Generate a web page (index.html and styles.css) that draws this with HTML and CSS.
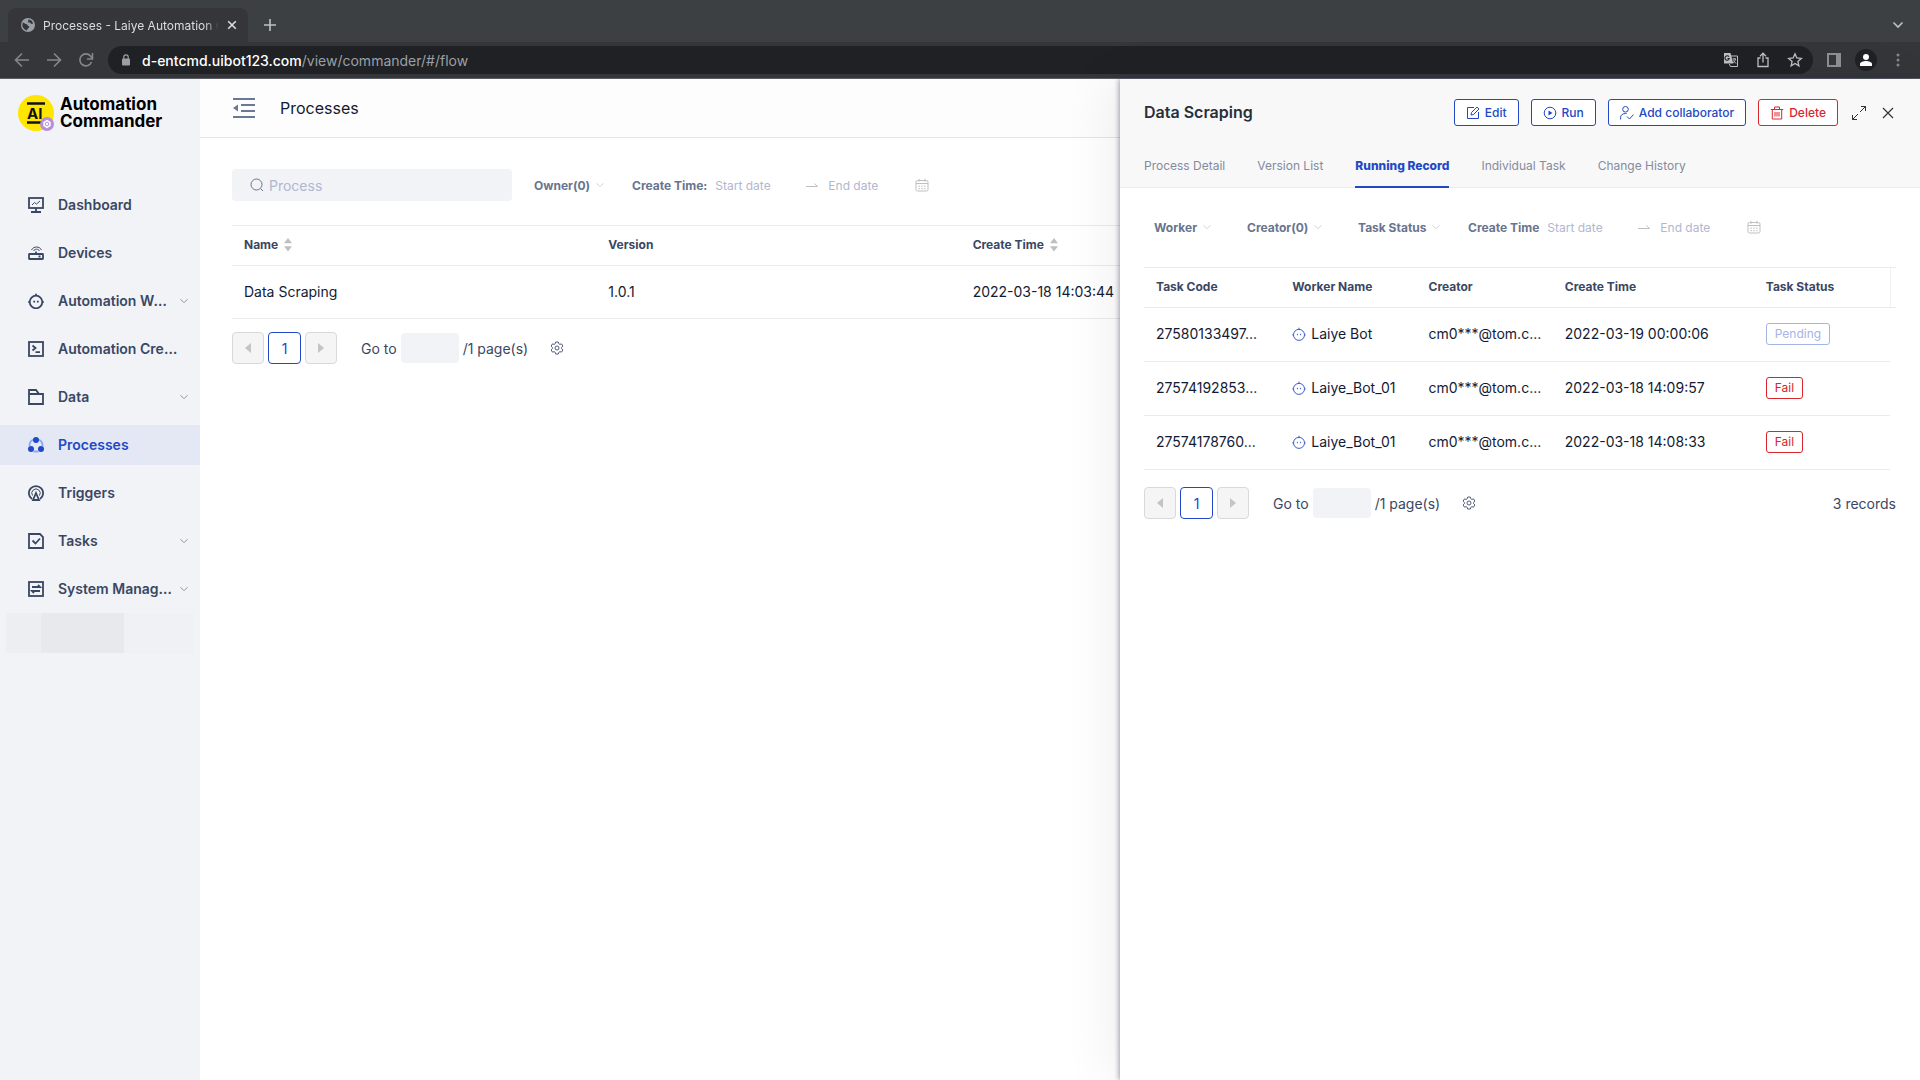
FILE: index.html
```html
<!DOCTYPE html>
<html lang="en">
  <head>
    <meta charset="UTF-8" />
    <meta name="viewport" content="width=device-width, initial-scale=1.0" />
    <title>Processes - Laiye Automation Commander</title>
    <link rel="stylesheet" href="styles.css">
  </head>
  <body>
    <!-- shared icons -->
    <svg class="sprite" width="0" height="0" aria-hidden="true">
      <symbol id="chevron" viewBox="0 0 8 8"><path d="M.5 2.200 4 5.700l3.500-3.500" /></symbol>
      <symbol id="calendar" viewBox="0 0 14 14">
        <rect x="1" y="2.500" width="12" height="10.500" rx="1.500" />
        <path d="M1 5.500h12M4 .8v3M10 .8v3M3.500 8.200h1.500M6.200 8.200h1.600M9 8.200h1.500M3.500 10.700h1.500M6.200 10.700h1.600M9 10.700h1.500" />
      </symbol>
      <symbol id="range" viewBox="0 0 12 12"><path d="M0 7.500h11.500L8.500 4.500" /></symbol>
      <symbol id="bot" viewBox="0 0 16 16">
        <circle cx="8" cy="9" r="6.300" />
        <path d="M8 2.700V.8M1.500 9H.3M15.700 9h-1.200M6.200 7.800v1.600M9.800 7.800v1.600" />
      </symbol>
      <symbol id="gear" viewBox="0 0 16 16">
        <path d="M6.500 1.200h3l.5 1.900 1.300.8 1.900-.6 1.500 2.600-1.400 1.400v1.500l1.400 1.400-1.500 2.500-1.900-.5-1.300.8-.5 1.900h-3L6 13l-1.300-.8-1.900.5-1.500-2.500 1.400-1.400V7.300L1.300 5.900l1.500-2.600 1.900.6L6 3.100z" />
        <circle cx="8" cy="8" r="2.300" />
      </symbol>
      <symbol id="sort" viewBox="0 0 8 14"><path d="M4 0l4 5.200H0zM4 13.500l4-5.200H0z" /></symbol>
      <symbol id="prev" viewBox="0 0 8 12"><path d="M7 1v10L1 6z" /></symbol>
      <symbol id="next" viewBox="0 0 8 12"><path d="M1 1v10l6-5z" /></symbol>
    </svg>

    <header class="browser">
      <div class="tabs-strip">
        <div class="browser-tab">
          <svg class="globe" width="14" height="14" viewBox="0 0 14 14">
            <circle cx="7" cy="7" r="7" fill="#9aa0a6" />
            <path d="M2 4.500c1.500 0 1.500 1.500 3 1.500s1 1.500 2.500 2 .5 2-.5 2.500-.5 2-1.500 2A5.600 5.600 0 0 1 2 4.500zM7 1.500c2.500 0 4.500 1.500 5 4-1 1-2 .5-2.500-.5S7 5 7 4s1-1 0-2.500z" fill="#35363a" />
          </svg>
          <span class="tab-title">Processes - Laiye Automation Commander</span>
          <button class="chrome-btn" aria-label="Close tab">
            <svg width="10" height="10" viewBox="0 0 10 10"><path d="M1.200 1.200l7.600 7.600M8.800 1.200 1.200 8.800" stroke="#dadce0" /></svg>
          </button>
        </div>
        <button class="chrome-btn" aria-label="New tab">
          <svg width="12" height="12" viewBox="0 0 12 12"><path d="M6 0v12M0 6h12" stroke="#bdc1c6" /></svg>
        </button>
        <button class="chrome-btn tab-search" aria-label="Search tabs">
          <svg width="12" height="12" viewBox="0 0 12 12"><path d="M1.500 3.500 6 8l4.500-4.500" stroke="#bdc1c6" /></svg>
        </button>
      </div>
      <div class="toolbar">
        <div class="nav-btns">
          <button class="chrome-btn" aria-label="Back">
            <svg width="16" height="16" viewBox="0 0 16 16"><path d="M15 8H2M8 1.500 1.500 8 8 14.500" stroke="#85878a" /></svg>
          </button>
          <button class="chrome-btn" aria-label="Forward">
            <svg width="16" height="16" viewBox="0 0 16 16"><path d="M1 8h13M8 1.500 14.500 8 8 14.500" stroke="#85878a" /></svg>
          </button>
          <button class="chrome-btn" aria-label="Reload">
            <svg width="16" height="16" viewBox="0 0 16 16"><path d="M13.500 10A6 6 0 1 1 12.500 4l1.500 2" stroke="#85878a" /><path d="M14.500 1v6H9" stroke="#85878a" /></svg>
          </button>
        </div>
        <div class="omnibox">
          <svg width="10" height="12" viewBox="0 0 10 12"><rect x="1" y="4.500" width="8" height="7" rx="1" fill="#9aa0a6" /><path d="M2.800 5V3a2.200 2.200 0 0 1 4.400 0v2" fill="none" stroke="#9aa0a6" stroke-width="1.200" /></svg>
          <span class="url"><b>d-entcmd.uibot123.com</b>/view/commander/#/flow</span>
          <button class="chrome-btn" aria-label="Translate">
            <svg width="16" height="16" viewBox="0 0 16 16">
              <path d="M7 4h7.500v10.500H7.500L6.300 12" stroke="#bdc1c6" stroke-width="1" />
              <path d="M1 1h6.500l2.800 10.500H1z" fill="#bdc1c6" />
              <path d="M6 4.800A2.200 2.200 0 1 0 6.300 6.500H4.500" stroke="#202124" stroke-width="1.100" />
              <path d="M9.500 7H13M11.200 6v1M12.500 7c-.4 2-1.500 3-2.500 3.800M10.500 8.500l2.500 3" stroke="#bdc1c6" stroke-width="1" />
            </svg>
          </button>
          <button class="chrome-btn" aria-label="Share">
            <svg width="16" height="16" viewBox="0 0 16 16"><path d="M5.500 6H3v8.500h10V6h-2.500M8 10.500V1.500M5 4.200l3-3 3 3" stroke="#bdc1c6" stroke-width="1.300" /></svg>
          </button>
          <button class="chrome-btn" aria-label="Bookmark">
            <svg width="16" height="16" viewBox="0 0 16 16"><path d="M8 1.800l1.800 4.200 4.500.4-3.400 3 1 4.400L8 11.500l-3.900 2.300 1-4.400-3.400-3L6.200 6z" stroke="#bdc1c6" stroke-width="1.300" /></svg>
          </button>
        </div>
        <button class="chrome-btn" aria-label="Side panel">
          <svg width="14" height="14" viewBox="0 0 14 14"><path d="M1 1h12v12H1z" stroke="#8d8f93" stroke-width="2" /><path d="M9 1h4v12H9z" fill="#8d8f93" /></svg>
        </button>
        <button class="chrome-btn avatar" aria-label="Profile">
          <svg width="12" height="12" viewBox="0 0 12 12"><circle cx="6" cy="3" r="3" /><path d="M0 12v-2c0-2 3.500-3 6-3s6 1 6 3v2z" /></svg>
        </button>
        <button class="chrome-btn" aria-label="Menu">
          <svg width="4" height="14" viewBox="0 0 4 14"><circle cx="2" cy="2" r="1.500" /><circle cx="2" cy="7" r="1.500" /><circle cx="2" cy="12" r="1.500" /></svg>
        </button>
      </div>
    </header>

    <div class="app">
      <aside class="sidebar">
        <div class="logo">
          <svg width="38" height="38" viewBox="0 0 38 38">
            <circle cx="18" cy="18" r="18" fill="#ffe600" />
            <path d="M9 8.500h18M9 27.500h14" stroke="#111" stroke-width="2.400" />
            <text x="9" y="24" class="logo-mark">AI</text>
            <circle cx="29" cy="29" r="7" fill="#b58fdc" />
            <path d="M29 24.800l3.700 2.100v4.200L29 33.200l-3.700-2.100v-4.200z" fill="#fff" />
            <circle cx="29" cy="29" r="1.800" fill="none" stroke="#b58fdc" />
          </svg>
          <span class="logo-text">Automation<br />Commander</span>
        </div>
        <nav class="menu">
          <a class="menu-item" href="#">
            <svg class="menu-icon" viewBox="0 0 16 16"><rect x="1" y="1" width="14" height="10" /><path d="M8 11v4M3 15h10" /><path class="thin" d="M4 8l2.500-2.500 2 1.500L12 4" /></svg>
            <span>Dashboard</span>
          </a>
          <a class="menu-item" href="#">
            <svg class="menu-icon" viewBox="0 0 16 16"><rect x="1" y="9" width="14" height="5" rx=".5" /><path d="M8 9V6.500M10.500 11.500h2" /><path class="thin" d="M3.500 5c2-4 8-4 10 0M5.500 6c1.200-2.400 4.800-2.400 6 0" /></svg>
            <span>Devices</span>
          </a>
          <a class="menu-item" href="#">
            <svg class="menu-icon"><use href="#bot" /></svg>
            <span>Automation Worker</span>
            <svg class="chevron"><use href="#chevron" /></svg>
          </a>
          <a class="menu-item" href="#">
            <svg class="menu-icon" viewBox="0 0 16 16"><rect x="1" y="1" width="14" height="14" /><path d="M4.500 4.500l3 2.500-3 2.500M7.500 11.200H12" /></svg>
            <span>Automation Creator</span>
          </a>
          <a class="menu-item" href="#">
            <svg class="menu-icon" viewBox="0 0 16 16"><path d="M1 15V1h7l3 4h4v10zM1 5h10" /></svg>
            <span>Data</span>
            <svg class="chevron"><use href="#chevron" /></svg>
          </a>
          <a class="menu-item active" href="#">
            <svg class="menu-icon" viewBox="0 0 16 16"><path class="ring" d="M5.500 2.500A6.500 6.500 0 0 0 1.500 9M10.500 2.500a6.500 6.500 0 0 1 4 6.500M5.500 14.500h5" /><circle class="dot" cx="8" cy="3" r="3" /><circle class="dot" cx="3" cy="12" r="3" /><circle class="dot" cx="13" cy="12" r="3" /></svg>
            <span>Processes</span>
          </a>
          <a class="menu-item" href="#">
            <svg class="menu-icon" viewBox="0 0 16 16"><path d="M4 14A7.100 7.100 0 1 1 12 14" /><path class="thin" d="M4.500 10.500a4.200 4.200 0 1 1 7 0" /><path d="M8 8l3 7H5z" /></svg>
            <span>Triggers</span>
          </a>
          <a class="menu-item" href="#">
            <svg class="menu-icon" viewBox="0 0 16 16"><path d="M1 1h11l3 3v11H1zM4.500 7.500l3 3 4.500-5" /></svg>
            <span>Tasks</span>
            <svg class="chevron"><use href="#chevron" /></svg>
          </a>
          <a class="menu-item" href="#">
            <svg class="menu-icon" viewBox="0 0 16 16"><rect x="1" y="1" width="14" height="14" /><path d="M4 6h8L10 4M12 10H4l2 2" /></svg>
            <span>System Management</span>
            <svg class="chevron"><use href="#chevron" /></svg>
          </a>
        </nav>
        <div class="redacted"><i></i><i></i><i></i></div>
      </aside>

      <main class="main">
        <div class="page-head">
          <button class="icon-btn" aria-label="Collapse menu">
            <svg width="22" height="20" viewBox="0 0 22 20"><path d="M0 1h22M8 7h14M8 13h14M0 19h22" stroke="#6b7896" stroke-width="1.800" fill="none" /><path d="M5 6.500v7L0 10z" fill="#6b7896" /></svg>
          </button>
          <h1>Processes</h1>
        </div>

        <div class="content">
          <div class="filters">
            <label class="search">
              <svg width="14" height="14" viewBox="0 0 14 14"><circle cx="6.500" cy="6.500" r="5.500" /><path d="M10.500 10.500l2.500 2.500" /></svg>
              <input type="text" placeholder="Process" aria-label="Process" />
            </label>
            <div class="select">
              <select aria-label="Owner"><option>Owner(0)</option></select>
              <svg class="chevron"><use href="#chevron" /></svg>
            </div>
            <div class="dates">
              <label for="listStart">Create Time:</label>
              <input type="text" id="listStart" placeholder="Start date" />
              <svg class="range"><use href="#range" /></svg>
              <input type="text" placeholder="End date" aria-label="End date" />
              <svg class="calendar"><use href="#calendar" /></svg>
            </div>
          </div>

          <table class="table process-table">
            <thead>
              <tr>
                <th>Name <svg class="sort"><use href="#sort" /></svg></th>
                <th>Version</th>
                <th>Create Time <svg class="sort"><use href="#sort" /></svg></th>
              </tr>
            </thead>
            <tbody>
              <tr>
                <td>Data Scraping</td>
                <td>1.0.1</td>
                <td>2022-03-18 14:03:44</td>
              </tr>
            </tbody>
          </table>

          <div class="pager">
            <button class="page-btn" disabled aria-label="Previous page"><svg><use href="#prev" /></svg></button>
            <button class="page-btn current">1</button>
            <button class="page-btn" disabled aria-label="Next page"><svg><use href="#next" /></svg></button>
            <label class="goto">Go to <input type="text" /> /1 page(s)</label>
            <button class="icon-btn" aria-label="Table settings"><svg class="gear"><use href="#gear" /></svg></button>
          </div>
        </div>
      </main>

      <section class="drawer">
        <div class="drawer-head">
          <div class="drawer-title">
            <h2>Data Scraping</h2>
            <button class="btn">
              <svg width="14" height="14" viewBox="0 0 14 14"><path d="M8 1.500H1.500v11h11V6M5 9l.5-2.500L11 1l2 2-5.500 5.500z" /></svg>
              Edit
            </button>
            <button class="btn">
              <svg width="14" height="14" viewBox="0 0 14 14"><circle cx="7" cy="7" r="5.800" /><path d="M5.500 4.500v5L9.500 7z" fill="currentColor" stroke="none" /></svg>
              Run
            </button>
            <button class="btn">
              <svg width="14" height="14" viewBox="0 0 14 14"><circle cx="5.500" cy="3.300" r="2.800" /><path d="M.6 13.500v-2c0-2.500 2-4 5-4h1M7 10.500l2.500 2.500 4-4.500" /></svg>
              Add collaborator
            </button>
            <button class="btn danger">
              <svg width="14" height="14" viewBox="0 0 14 14"><path d="M.8 3.500h12.400M2.300 3.500v9.500h9.400V3.500M4.500 3.500v-2.500h5v2.500M5 6v4.500M7 6v4.500M9 6v4.500" /></svg>
              Delete
            </button>
            <button class="icon-btn" aria-label="Expand">
              <svg width="14" height="14" viewBox="0 0 14 14"><path d="M8 6l5.500-5.500M9 .5h4.500V5M6 8 .5 13.500M.5 9v4.500H5" stroke="#333" fill="none" /></svg>
            </button>
            <button class="icon-btn" aria-label="Close">
              <svg width="12" height="12" viewBox="0 0 12 12"><path d="M1 1l10 10M11 1 1 11" stroke="#333" stroke-width="1.200" fill="none" /></svg>
            </button>
          </div>
          <nav class="tabs">
            <a href="#">Process Detail</a>
            <a href="#">Version List</a>
            <a href="#" class="active">Running Record</a>
            <a href="#">Individual Task</a>
            <a href="#">Change History</a>
          </nav>
        </div>

        <div class="drawer-body">
          <div class="filters">
            <div class="select">
              <select aria-label="Worker"><option>Worker</option></select>
              <svg class="chevron"><use href="#chevron" /></svg>
            </div>
            <div class="select">
              <select aria-label="Creator"><option>Creator(0)</option></select>
              <svg class="chevron"><use href="#chevron" /></svg>
            </div>
            <div class="select">
              <select aria-label="Task Status"><option>Task Status</option></select>
              <svg class="chevron"><use href="#chevron" /></svg>
            </div>
            <div class="dates">
              <label for="recordStart">Create Time</label>
              <input type="text" id="recordStart" placeholder="Start date" />
              <svg class="range"><use href="#range" /></svg>
              <input type="text" placeholder="End date" aria-label="End date" />
              <svg class="calendar"><use href="#calendar" /></svg>
            </div>
          </div>

          <table class="table record-table">
            <thead>
              <tr>
                <th>Task Code</th>
                <th>Worker Name</th>
                <th>Creator</th>
                <th>Create Time</th>
                <th>Task Status</th>
                <th class="gutter"></th>
              </tr>
            </thead>
            <tbody>
              <tr>
                <td>27580133497...</td>
                <td><svg class="bot"><use href="#bot" /></svg>Laiye Bot</td>
                <td>cm0***@tom.c...</td>
                <td>2022-03-19 00:00:06</td>
                <td><span class="tag pending">Pending</span></td>
              </tr>
              <tr>
                <td>27574192853...</td>
                <td><svg class="bot"><use href="#bot" /></svg>Laiye_Bot_01</td>
                <td>cm0***@tom.c...</td>
                <td>2022-03-18 14:09:57</td>
                <td><span class="tag">Fail</span></td>
              </tr>
              <tr>
                <td>27574178760...</td>
                <td><svg class="bot"><use href="#bot" /></svg>Laiye_Bot_01</td>
                <td>cm0***@tom.c...</td>
                <td>2022-03-18 14:08:33</td>
                <td><span class="tag">Fail</span></td>
              </tr>
            </tbody>
          </table>

          <div class="pager">
            <button class="page-btn" disabled aria-label="Previous page"><svg><use href="#prev" /></svg></button>
            <button class="page-btn current">1</button>
            <button class="page-btn" disabled aria-label="Next page"><svg><use href="#next" /></svg></button>
            <label class="goto">Go to <input type="text" /> /1 page(s)</label>
            <button class="icon-btn" aria-label="Table settings"><svg class="gear"><use href="#gear" /></svg></button>
            <span class="records">3 records</span>
          </div>
        </div>
      </section>
    </div>
  </body>
</html>
```
FILE: styles.css
```css
* {
  box-sizing: border-box;
}
body {
  margin: 0;
  min-height: 100vh;
  display: flex;
  flex-direction: column;
  font-family: Inter, "Liberation Sans", sans-serif;
  font-size: 14px;
  color: #131a33;
  background: #fff;
}
button,
input,
select {
  font: inherit;
  color: inherit;
  background: none;
  border: none;
  padding: 0;
  margin: 0;
}
button {
  cursor: pointer;
}
a {
  color: inherit;
  text-decoration: none;
}
svg {
  flex: none;
}
.sprite {
  position: absolute;
}

/* browser */
.browser {
  background: #3c4043;
  border-bottom: 1px solid #5a5d61;
}
.chrome-btn {
  display: flex;
  flex: none;
}
.chrome-btn svg {
  fill: none;
  stroke-width: 1.6;
}
.tabs-strip {
  display: flex;
  align-items: center;
  gap: 16px;
  height: 42px;
  padding: 8px 16px 0 8px;
}
.browser-tab {
  display: flex;
  align-items: center;
  gap: 8px;
  width: 240px;
  height: 34px;
  padding: 0 11px 0 13px;
  background: #35363a;
  border-radius: 8px 8px 0 0;
  font-size: 12px;
  color: #dadce0;
}
.tab-title {
  flex: 1;
  overflow: hidden;
  white-space: nowrap;
  mask-image: linear-gradient(to right, #000 92%, transparent);
}
.tab-search {
  margin-left: auto;
}
.toolbar {
  display: flex;
  align-items: center;
  gap: 14px;
  height: 36px;
  padding: 0 20px 0 14px;
  background: #35363a;
}
.nav-btns {
  display: flex;
  gap: 16px;
}
.omnibox {
  flex: 1;
  display: flex;
  align-items: center;
  gap: 16px;
  height: 28px;
  padding: 0 10px 0 13px;
  background: #202124;
  border-radius: 14px;
  color: #9aa0a6;
}
.url {
  flex: 1;
}
.url b {
  font-weight: 500;
  color: #fff;
}
.omnibox > svg + .url {
  margin-left: -5px;
}
.avatar {
  justify-content: center;
  align-items: center;
  width: 22px;
  height: 22px;
  margin-right: 5px;
  border-radius: 50%;
  background: #202124;
}
.avatar svg {
  fill: #fff;
}
.toolbar > .chrome-btn:last-child svg {
  fill: #85878a;
}

/* app */
.app {
  position: relative;
  flex: 1;
  display: flex;
}
.sidebar {
  flex: none;
  width: 200px;
  background: #f1f3f7;
  color: #3a4763;
}
.logo {
  display: flex;
  gap: 4px;
  padding: 16px 18px;
}
.logo-mark {
  font-size: 15px;
  font-weight: 700;
  fill: #111;
}
.logo-text {
  font-size: 17px;
  font-weight: 700;
  line-height: 17px;
  padding-top: 1px;
  color: #000;
}
.menu {
  display: flex;
  flex-direction: column;
  gap: 8px;
  padding-top: 36px;
}
.menu-item {
  display: flex;
  align-items: center;
  height: 40px;
  padding: 0 12px 1px 28px;
  font-weight: 600;
}
.menu-item span {
  flex: 1;
  margin: 0 6px 0 14px;
  overflow: hidden;
  text-overflow: ellipsis;
  white-space: nowrap;
}
.menu-item.active {
  background: #e3e8f4;
  color: #2248c5;
}
.menu-icon {
  width: 16px;
  height: 16px;
  fill: none;
  stroke: currentColor;
  stroke-width: 1.8;
}
.menu-icon .thin {
  stroke-width: 1;
}
.menu-icon .ring {
  stroke: #85abfa;
}
.menu-icon .dot {
  fill: currentColor;
  stroke: none;
}
.chevron {
  width: 8px;
  height: 8px;
  fill: none;
  stroke: #8c95a8;
}
.redacted {
  display: flex;
  height: 40px;
  margin: 4px 6px;
}
.redacted i {
  flex: 6;
  background: #f0f1f5;
}
.redacted i:first-child {
  flex: 3;
  background: #edeef1;
}
.redacted i:nth-child(2) {
  flex: 7;
  background: #e8e9ec;
}

.main {
  flex: 1;
  min-width: 0;
}
.page-head {
  display: flex;
  align-items: center;
  gap: 25px;
  height: 59px;
  padding: 0 33px;
  background: #fdfdfd;
  border-bottom: 1px solid #e3e5e8;
}
.page-head h1 {
  margin: 0;
  font-size: 16px;
  font-weight: 400;
}
.icon-btn {
  display: flex;
}
.content {
  padding: 31px 32px;
}

/* filters */
.filters {
  display: flex;
  align-items: center;
  gap: 36px;
  height: 32px;
  font-size: 12px;
  color: #68748f;
}
.search {
  display: flex;
  align-items: center;
  gap: 5px;
  width: 280px;
  height: 32px;
  margin-right: -14px;
  padding: 0 18px;
  border-radius: 4px;
  background: #f1f3f7;
  font-size: 14px;
}
.search svg {
  fill: none;
  stroke: #68748f;
}
.search input {
  flex: 1;
  min-width: 0;
}
::placeholder {
  color: #b0b7d0;
  opacity: 1;
}
.select {
  display: flex;
  align-items: center;
  gap: 5px;
}
.select select {
  appearance: none;
  font-weight: 700;
}
.select .chevron {
  stroke: #cfd2d8;
}
.dates {
  display: flex;
  align-items: center;
  margin-left: -8px;
}
.dates label {
  margin-right: 8px;
  font-weight: 700;
}
.dates input {
  width: 87px;
}
.range {
  width: 12px;
  height: 12px;
  margin: 0 10px 0 4px;
  fill: none;
  stroke: #bfbfbf;
}
.calendar {
  width: 14px;
  height: 14px;
  fill: none;
  stroke: #bfbfbf;
}

/* tables */
.table {
  width: 100%;
  margin-top: 24px;
  border-collapse: separate;
  border-spacing: 0;
  table-layout: fixed;
  border-top: 1px solid #ebebed;
}
.table th,
.table td {
  padding: 0 12px 2px;
  text-align: left;
  white-space: nowrap;
  border-bottom: 1px solid #ebebed;
}
.table th {
  height: 40px;
  font-size: 12px;
  font-weight: 700;
  color: #3a4763;
}
.table td {
  height: 53px;
}
.process-table th {
  width: 22%;
}
.process-table th:last-child {
  width: 56%;
}
.sort {
  width: 8px;
  height: 14px;
  margin-left: 3px;
  vertical-align: middle;
  fill: #bfbfbf;
}
.record-table td {
  height: 54px;
}
.record-table th:nth-child(4) {
  width: 201px;
}
.record-table .gutter {
  width: 6px;
  padding: 0;
  border-left: 1px solid #f0f0f0;
}
.bot {
  width: 14px;
  height: 14px;
  margin-right: 5px;
  vertical-align: -2px;
  fill: none;
  stroke: #2248c5;
}
.tag {
  display: inline-block;
  padding: 0 8px;
  border: 1px solid #d9262c;
  border-radius: 3px;
  font-size: 12px;
  line-height: 20px;
  color: #d9262c;
}
.tag.pending {
  border-color: #a5b4e6;
  color: #a5b4e6;
}

/* pagination */
.pager {
  display: flex;
  align-items: center;
  margin-top: 13px;
  color: #3a4763;
}
.page-btn {
  display: flex;
  align-items: center;
  justify-content: center;
  width: 32px;
  height: 32px;
  margin-right: 4px;
  border: 1px solid #d9d9d9;
  border-radius: 4px;
  background: #f5f5f5;
}
.page-btn svg {
  width: 8px;
  height: 12px;
  fill: #c4c4c4;
}
.page-btn.current {
  width: 33px;
  border-color: #2248c5;
  background: #fff;
  color: #2248c5;
}
.goto {
  display: flex;
  align-items: center;
  gap: 4px;
  margin: 0 22px 0 20px;
}
.goto input {
  width: 58px;
  height: 30px;
  border-radius: 4px;
  background: #f1f3f7;
}
.gear {
  width: 14px;
  height: 14px;
  fill: none;
  stroke: #3a4763;
}
.records {
  margin-left: auto;
}

/* drawer */
.drawer {
  position: absolute;
  top: 0;
  right: 0;
  bottom: 0;
  width: 800px;
  max-width: 100%;
  background: #fff;
  box-shadow: -1px 0 5px rgba(40, 50, 80, 0.45), -12px 0 48px rgba(0, 0, 0, 0.06);
}
.drawer-head {
  padding: 20px 24px 0;
  background: #f8f8f8;
  border-bottom: 1px solid #ebebed;
}
.drawer-title {
  display: flex;
  align-items: center;
  gap: 12px;
  height: 27px;
}
.drawer-title h2 {
  flex: 1;
  margin: 0;
  padding-bottom: 2px;
  font-size: 16px;
  font-weight: 600;
  line-height: 24px;
  color: #25303b;
}
.btn {
  display: flex;
  align-items: center;
  gap: 5px;
  height: 27px;
  padding: 0 11px;
  border: 1px solid #2248c5;
  border-radius: 3px;
  background: #fff;
  font-size: 12px;
  font-weight: 500;
  color: #2248c5;
}
.btn svg {
  fill: none;
  stroke: currentColor;
}
.btn.danger {
  border-color: #d9262c;
  color: #d9262c;
}
.drawer-title .icon-btn {
  margin: 0 2px;
}
.tabs {
  display: flex;
  gap: 32px;
  margin-top: 20px;
  font-size: 12px;
  line-height: 40px;
  color: #848b9e;
}
.tabs .active {
  margin-bottom: -1px;
  border-bottom: 2px solid #2248c5;
  font-weight: 800;
  color: #2248c5;
}
.drawer-body {
  padding: 23px 24px;
}
.drawer-body .filters {
  padding-left: 10px;
}
.drawer-body .pager {
  margin-top: 17px;
}
```
